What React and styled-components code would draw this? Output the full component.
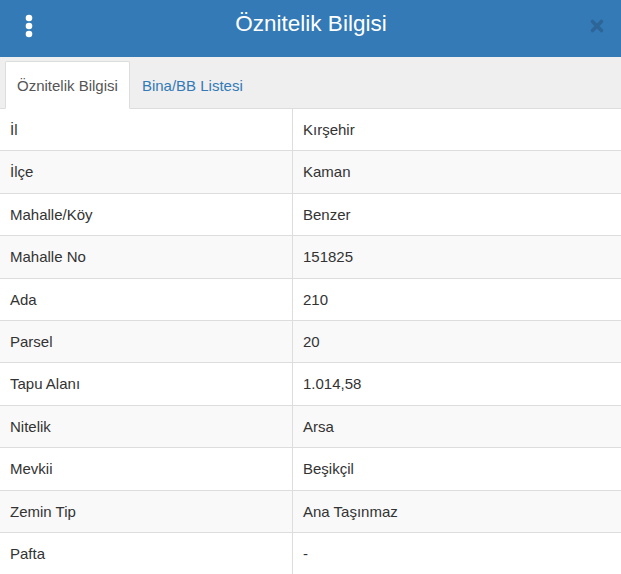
import React from "react"
import styled, { createGlobalStyle } from "styled-components"

const rows = [
    ["İl", "Kırşehir"],
    ["İlçe", "Kaman"],
    ["Mahalle/Köy", "Benzer"],
    ["Mahalle No", "151825"],
    ["Ada", "210"],
    ["Parsel", "20"],
    ["Tapu Alanı", "1.014,58"],
    ["Nitelik", "Arsa"],
    ["Mevkii", "Beşikçil"],
    ["Zemin Tip", "Ana Taşınmaz"],
    ["Pafta", "-"],
]

export default function App() {
    return (
        <>
            <GlobalStyle />
            <Panel>
                <Header>
                    <MenuButton>
                        <svg width="8" height="24" viewBox="0 0 8 24">
                            <circle cx="4" cy="4" r="3.3" fill="#fff" />
                            <circle cx="4" cy="12" r="3.3" fill="#fff" />
                            <circle cx="4" cy="20" r="3.3" fill="#fff" />
                        </svg>
                    </MenuButton>
                    <Title>Öznitelik Bilgisi</Title>
                    <CloseButton>
                        <svg width="16" height="16" viewBox="0 0 16 16">
                            <path d="M3.5 3.5 L12.5 12.5 M12.5 3.5 L3.5 12.5" stroke="#2d6597" strokeWidth="3.6" strokeLinecap="round" />
                        </svg>
                    </CloseButton>
                </Header>
                <Tabs>
                    <Tab active>Öznitelik Bilgisi</Tab>
                    <Tab>Bina/BB Listesi</Tab>
                </Tabs>
                <Table>
                    <tbody>
                        {rows.map(([label, value], i) =>
                            <Row key={i}>
                                <Label>{label}</Label>
                                <Value>{value}</Value>
                            </Row>
                        )}
                    </tbody>
                </Table>
            </Panel>
        </>
    )
}

const GlobalStyle = createGlobalStyle`
body{
    margin: 0;
    font-family: "Liberation Sans", Arial, sans-serif;
    background: #fff;
}
`
const Panel = styled.div`
width: 621px;
height: 574px;
overflow: hidden;
display: flex;
flex-direction: column;
`
const Header = styled.div`
height: 57px;
background-color: #337ab7;
display: flex;
align-items: center;
justify-content: space-between;
padding: 0 16px 0 25px;
box-sizing: border-box;
flex-shrink: 0;
`
const MenuButton = styled.div`
width: 8px;
display: flex;
align-items: center;
margin-top: -6px;
`
const Title = styled.h1`
margin: 0 0 9px 0;
font-size: 22.5px;
font-weight: 400;
color: #fff;
`
const CloseButton = styled.div`
display: flex;
align-items: center;
margin-top: -6px;
`
const Tabs = styled.div`
height: 52px;
background-color: #efefef;
border-bottom: 1px solid #dddddd;
display: flex;
align-items: flex-end;
padding-left: 5px;
box-sizing: border-box;
flex-shrink: 0;
`
const Tab = styled.div`
height: 48px;
margin-bottom: -1px;
padding: 0 11px;
display: flex;
align-items: center;
box-sizing: border-box;
font-size: 15px;
color: ${props => props.active ? '#555555' : '#337ab7'};
background-color: ${props => props.active ? '#ffffff' : 'transparent'};
border: 1px solid ${props => props.active ? '#dddddd' : 'transparent'};
border-bottom-color: ${props => props.active ? '#ffffff' : 'transparent'};
border-radius: 2px 2px 0 0;
`
const Table = styled.table`
width: 100%;
border-collapse: collapse;
font-size: 15px;
color: #333333;
`
const Row = styled.tr`
background-color: #ffffff;
&:nth-of-type(even){
    background-color: #f9f9f9;
}
td{
    border-top: 1px solid #dddddd;
    padding: 10px 10px;
    line-height: 21.4px;
}
&:first-child td{
    border-top: none;
}
`
const Label = styled.td`
width: 272px;
border-right: 1px solid #dddddd;
`
const Value = styled.td`
`
